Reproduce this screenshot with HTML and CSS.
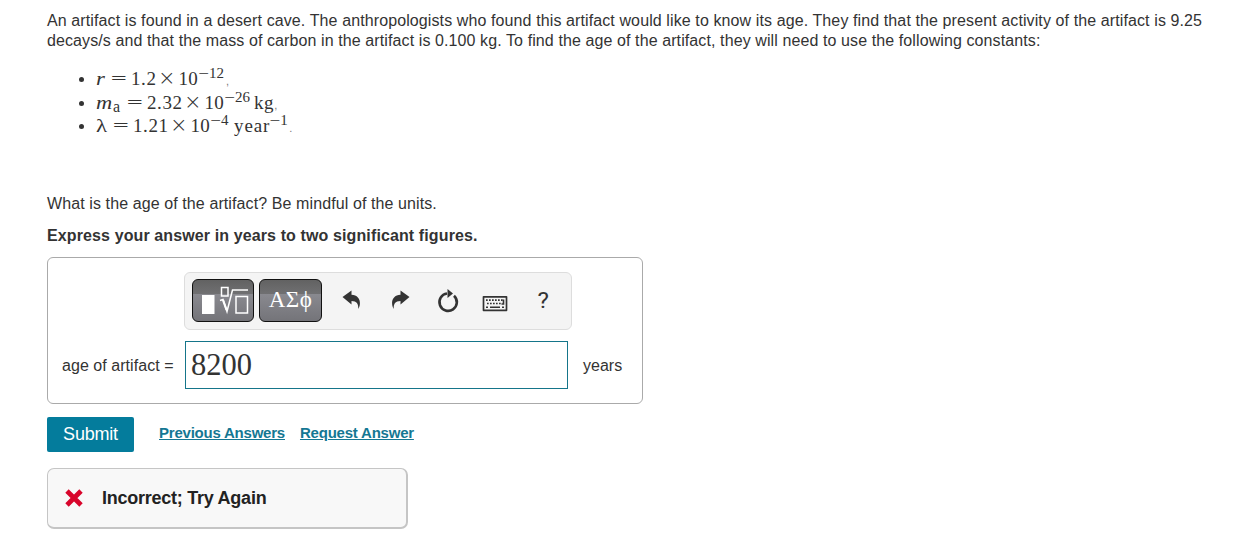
FILE: index.html
```html
<!DOCTYPE html>
<html lang="en">
<head>
<meta charset="utf-8">
<title>Age of an artifact</title>
<link rel="stylesheet" href="styles.css">
</head>
<body>
<main class="problem">
  <p class="intro"><span class="line line-one">An artifact is found in a desert cave. The anthropologists who found this artifact would like to know its age. They find that the present activity of the artifact is 9.25</span><br><span class="line line-two">decays/s and that the mass of carbon in the artifact is 0.100 kg. To find the age of the artifact, they will need to use the following constants:</span></p>
  <ul class="constants">
    <li><span class="w14"><i class="r">r</i></span><span class="w20 op">=</span><span class="w29 num">1.2</span><span class="w18 op">×</span><span class="w20 ten">10</span><span class="sup w28"><span class="minus">−</span>12</span><span class="punct">,</span></li>
    <li><span class="w30"><i class="m">m</i><sub>a</sub></span><span class="w20 op">=</span><span class="w39 num">2.32</span><span class="w18 op">×</span><span class="w20 ten">10</span><span class="sup w30"><span class="minus">−</span>26</span><span class="unit">kg</span><span class="punct">,</span></li>
    <li><span class="w16"><span class="lambda">λ</span></span><span class="w20 op">=</span><span class="w39 num">1.21</span><span class="w18 op">×</span><span class="w20 ten">10</span><span class="sup w24"><span class="minus">−</span>4</span><span class="unit year">year</span><span class="sup w20"><span class="minus">−</span>1</span><span class="punct">.</span></li>
  </ul>
  <p class="question">What is the age of the artifact? Be mindful of the units.</p>
  <p class="instruction">Express your answer in years to two significant figures.</p>
  <section class="answer">
    <div class="toolbar">
      <button class="tool-key" aria-label="Templates">
        <svg width="60" height="41" viewBox="0 0 60 41" fill="none" stroke="#fff"><path d="M9 15h12.500v19H9z" fill="#fff" stroke="none"/><path d="M28.500 7.500h6.500v8.500h-6.500z" stroke-width="1.500"/><path d="M27 20.500l3-1 4 12 5.500-21.500H55" stroke-width="1.500"/><path d="M30 20l3.600 10" stroke-width="2.200"/><path d="M43 16.500h11.500v16.500H43z" stroke-width="1.500"/></svg>
      </button>
      <button class="tool-key greek">ΑΣϕ</button>
      <svg class="icon undo" width="20" height="22" viewBox="0 0 20 22"><path d="M.5 8L9.500 1.500v4.200c5.500.3 8.800 3.800 8.400 9-.1 1.900-.7 3.500-1.600 5.300.2-5.300-1.500-8-6.800-8V15.500z"/></svg>
      <svg class="icon redo" width="20" height="22" viewBox="0 0 20 22"><path d="M19.500 8L10.500 1.500v4.200c-5.500.3-8.800 3.800-8.400 9 .1 1.900.7 3.500 1.600 5.300-.2-5.300 1.500-8 6.800-8V15.500z"/></svg>
      <svg class="icon reset" width="24" height="26" viewBox="0 0 24 26"><path d="M11 5.500A8.700 8.700 0 1 0 18 7.700" fill="none" stroke="#333" stroke-width="2.600"/><path d="M11.500 1l5.500 4.500-5.500 4.500z"/></svg>
      <svg class="icon keyboard" width="26" height="18" viewBox="0 0 26 18"><path d="M1.500 1.800h23v13.500h-23z" fill="none" stroke="#333" stroke-width="1.700" stroke-linejoin="round"/><path d="M4 5.200h18M5 8.500h14" stroke="#333" stroke-width="1.700" stroke-dasharray="1.700 1.300" fill="none"/><path d="M21.500 4.500v4.500h-2M4 12.200h2M8 12.200h10M20 12.200h2" stroke="#333" stroke-width="1.600" fill="none"/></svg>
      <span class="help">?</span>
    </div>
    <div class="field">
      <label for="age">age of artifact =</label>
      <input id="age" value="8200">
      <span class="years">years</span>
    </div>
  </section>
  <div class="actions">
    <button class="submit">Submit</button>
    <a class="previous" href="#">Previous Answers</a>
    <a class="request" href="#">Request Answer</a>
  </div>
  <div class="feedback">
    <svg width="18" height="18" viewBox="0 0 18 18"><path d="M3.700 3.700l10.600 10.600M14.300 3.700L3.700 14.300" stroke="#d8052b" stroke-width="4.800" stroke-linecap="square"/></svg>
    <strong>Incorrect; Try Again</strong>
  </div>
</main>
</body>
</html>
```
FILE: styles.css
```css
* { box-sizing: border-box; }
body { margin: 0; background: #fff; color: #333; font: 16px/20px "Liberation Sans", Arial, sans-serif; }
p { margin: 0; }
button { padding: 0; border: 0; font: inherit; }
.problem { padding: 11px 0 0 47px; }
.intro { white-space: nowrap; height: 40px; }
.line-one { letter-spacing: .107px; }
.line-two { letter-spacing: .1px; }
.constants { list-style: none; margin: 15px 0 0; padding: 0 0 0 32px; height: 72px; font: 19px/24px "Liberation Serif", serif; }
.constants li { display: flex; height: 23.600px; white-space: nowrap; align-items: baseline; }
.constants li::before { content: ""; width: 5px; height: 5px; border-radius: 50%; background: #333; margin-right: 12px; align-self: flex-start; margin-top: 11px; flex: none; }
.constants li > span { flex: none; }
.op { font: 200 21px/24px "DejaVu Sans", sans-serif; margin-left: -1px; margin-right: 1px; }
.num { letter-spacing: .600px; }
.ten { letter-spacing: .200px; position: relative; left: -.500px; }
.num + .op { position: relative; left: -2px; }
.w14 { width: 15px; } .w16 { width: 17px; } .w18 { width: 18px; } .w29 { width: 30px; }
.w20 { width: 20px; } .w24 { width: 23px; } .w28 { width: 27px; } .w30 { width: 31px; } .w39 { width: 40px; }
.sup { font-size: 15px; line-height: 14px; position: relative; top: -7px; left: -1px; }
.sup.w30 { width: 29px; }
.sup.w20 { width: 19px; }
.minus { display: inline-block; font: 200 14px/14px "DejaVu Sans", sans-serif; width: 11px; }
.unit { letter-spacing: .600px; }
.year { letter-spacing: .900px; }
sub { font-size: 16px; line-height: 0; vertical-align: -3px; }
.r { display: inline-block; transform: scaleX(1.200); transform-origin: left; }
.lambda { display: inline-block; transform: scaleX(1.200); transform-origin: left; }
.m { display: inline-block; width: 17px; transform: scaleX(1.180); transform-origin: left; }
.punct { font: 11px/20px "Liberation Sans", sans-serif; color: #777; }
.question { margin-top: 56px; letter-spacing: .100px; }
.instruction { margin-top: 12px; font-weight: bold; letter-spacing: .115px; }
.answer { width: 596px; height: 147px; margin-top: 11px; border: 1px solid #aaa; border-radius: 6px; padding-top: 14px; }
.toolbar { display: flex; align-items: center; width: 388px; height: 58px; margin-left: 136px; padding: 0 0 2px 7px; border: 1px solid #ddd; border-radius: 6px; background: #f4f4f4; }
.tool-key { display: block; width: 62px; height: 43px; border: 1px solid #111; border-radius: 6px; background: linear-gradient(#626262 0, #707072 34%, #89898f 35%, #747479 100%); color: #fff; margin-right: 5px; flex: none; }
.tool-key svg { display: block; }
.greek { width: 63px; font: 23px/38px "Liberation Serif", serif; letter-spacing: .500px; margin-right: 20px; }
.icon { flex: none; fill: #333; }
.redo { margin-left: 28px; }
.reset { margin: 1px 0 0 26px; }
.keyboard { margin: 7px 0 0 22px; }
.help { margin: 2px 0 0 30px; font: 22px/24px Roboto, sans-serif; transform: scaleX(1.100); }
.field { display: flex; align-items: center; height: 48px; margin-top: 11px; padding-left: 14px; }
.field label { width: 123px; flex: none; white-space: nowrap; position: relative; top: 1px; letter-spacing: .050px; }
.field input { width: 383px; height: 48px; border: 1px solid #15758a; padding: 0 5px; color: #333; font: 30.500px "Liberation Serif", serif; outline: 0; }
.years { margin: 2px 0 0 15px; }
.actions { display: flex; align-items: center; height: 35px; margin-top: 13px; }
.submit { width: 87px; height: 35px; padding-bottom: 2px; border-radius: 2px; background: #047c9c; color: #fff; font-size: 18px; letter-spacing: -.200px; }
.actions a { color: #147793; font-size: 15px; font-weight: bold; letter-spacing: -.220px; position: relative; top: -2px; }
.previous { margin-left: 25px; }
.request { margin-left: 15px; }
.feedback { display: flex; align-items: center; width: 361px; height: 61px; margin-top: 16px; padding-left: 17px; border: 1px solid #c5c5c5; border-bottom-width: 2px; border-right-width: 2px; border-radius: 7px; background: #f8f8f8; color: #222; font-size: 18px; }
.feedback strong { margin-left: 19px; letter-spacing: -.250px; }
```
